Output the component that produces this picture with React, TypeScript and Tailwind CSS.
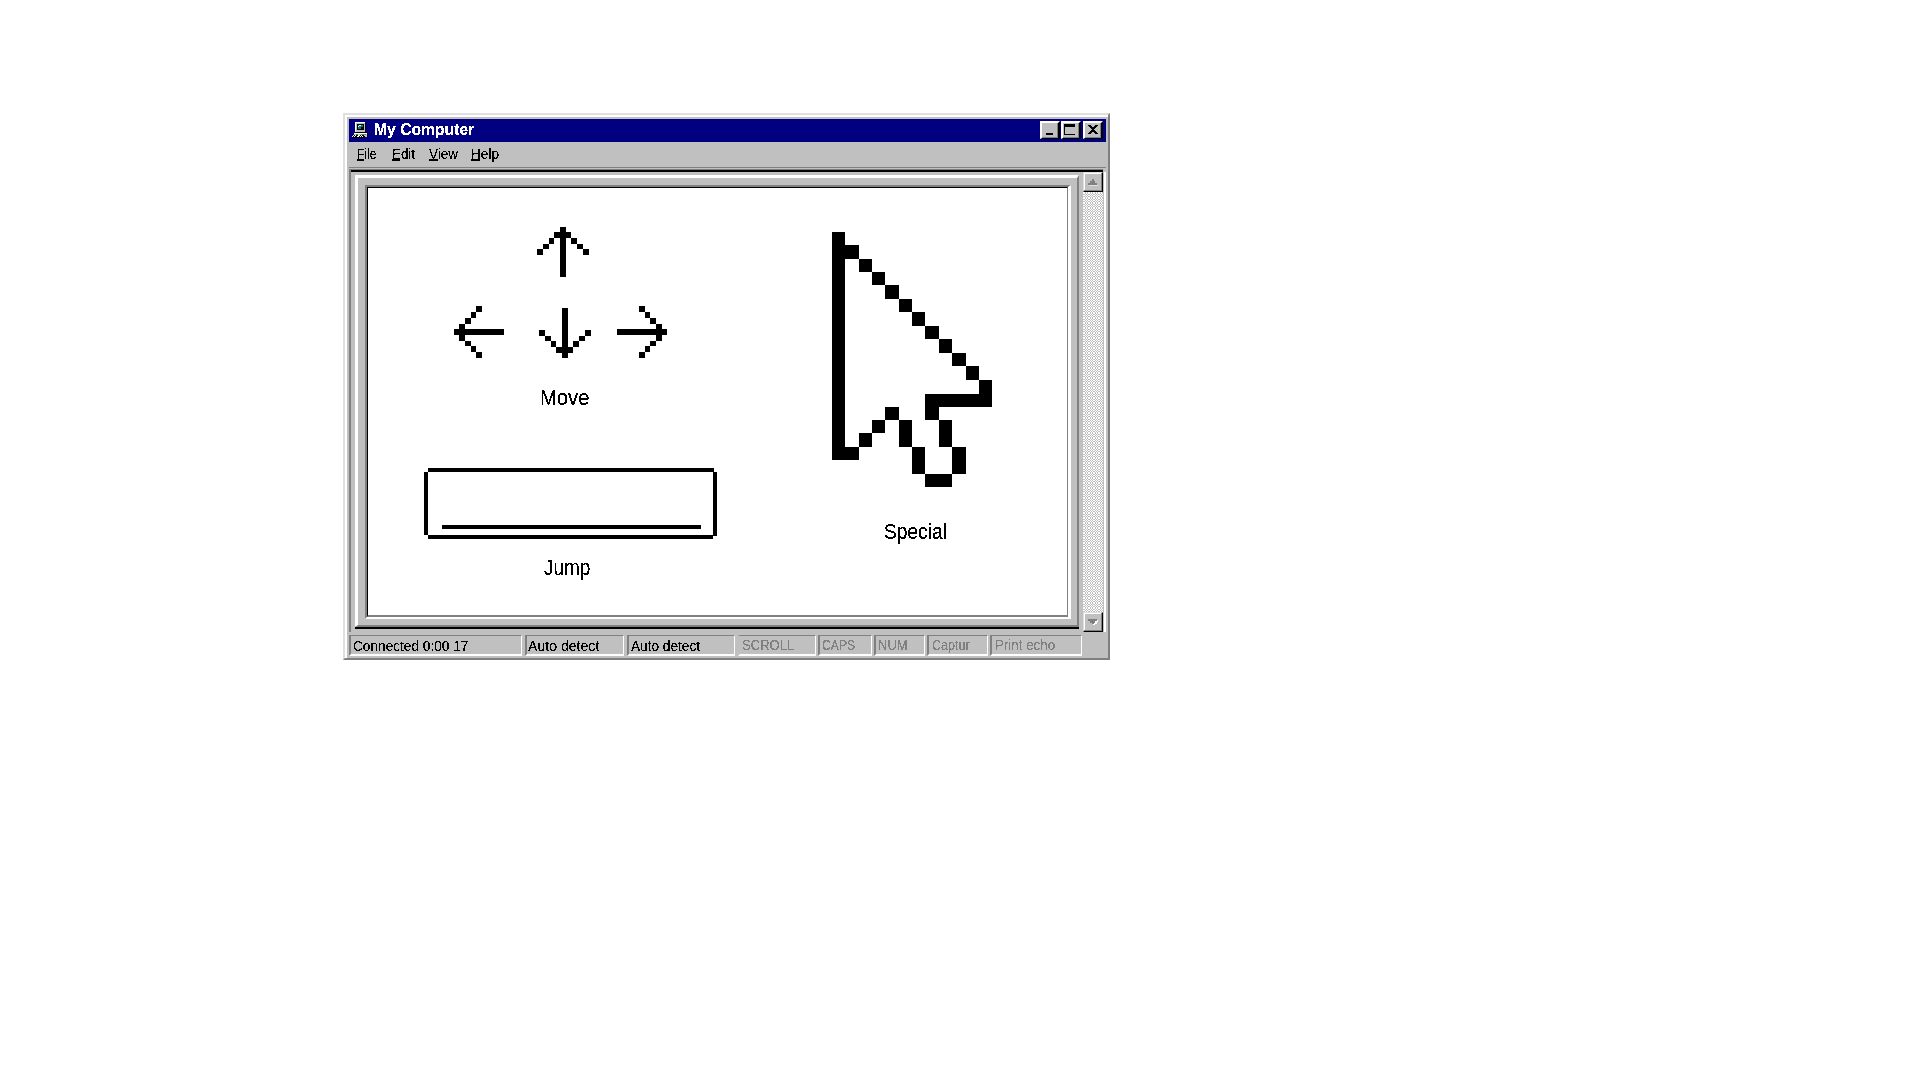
import React from "react";

type Rect = [number, number, number, number];

function Pixels({ w, h, rects, className = "" }: { w: number; h: number; rects: Rect[]; className?: string }) {
  return (
    <svg width={w} height={h} viewBox={`0 0 ${w} ${h}`} shapeRendering="crispEdges" className={`block shrink-0 ${className}`}>
      {rects.map(([x, y, rw, rh], i) => (
        <rect key={i} x={x} y={y} width={rw} height={rh} />
      ))}
    </svg>
  );
}

const upArrow: Rect[] = [
  [23, 0, 6, 50], [17, 5, 17, 6], [12, 11, 5, 6], [6, 17, 6, 5], [0, 22, 6, 6],
  [34, 11, 6, 6], [40, 17, 6, 5], [46, 22, 6, 6],
];
const downArrow: Rect[] = upArrow.map(([x, y, w, h]) => [x, 50 - y - h, w, h]);
const leftArrow: Rect[] = [
  [0, 23, 50, 6], [5, 18, 6, 17], [11, 12, 6, 6], [17, 6, 5, 6], [22, 0, 6, 6],
  [11, 35, 6, 5], [17, 40, 5, 6], [22, 46, 6, 6],
];
const rightArrow: Rect[] = leftArrow.map(([x, y, w, h]) => [50 - x - w, y, w, h]);
const spaceBar: Rect[] = [
  [4, 0, 286, 4], [0, 4, 4, 63], [289, 4, 4, 64], [4, 67, 285, 4], [18, 57, 259, 4],
];

const cols = [0, 13, 27, 40, 53, 67, 80, 93, 107, 120, 134, 147, 160];
const rowsY = [0, 13, 27, 40, 53, 67, 80, 94, 107, 121, 134, 148, 162, 175, 188, 201, 215, 228, 242, 255];
const cursorMap = [
  "#...........",
  "##..........",
  "#.#.........",
  "#..#........",
  "#...#.......",
  "#....#......",
  "#.....#.....",
  "#......#....",
  "#.......#...",
  "#........#..",
  "#.........#.",
  "#..........#",
  "#......#####",
  "#...#..#....",
  "#..#.#..#...",
  "#.#..#..#...",
  "##....#..#..",
  "......#..#..",
  ".......##...",
];
const cursor: Rect[] = cursorMap.flatMap((row, r) =>
  row.split("").flatMap((c, i): Rect[] =>
    c === "#" ? [[cols[i], rowsY[r], cols[i + 1] - cols[i], rowsY[r + 1] - rowsY[r]]] : []
  )
);

/* uneven checkerboard tile: a 4px checker stretched over 5px */
const parity = [0, 0, 1, 0, 1];
const dither: [number, number][] = parity.flatMap((py, y) =>
  parity.flatMap((px, x): [number, number][] => (px !== py ? [[x, y]] : []))
);

const crisp = "block w-fit origin-left whitespace-pre [filter:url(#crisp)]";

function MenuItem({ first, rest, line, scale, className }: { first: string; rest: string; line: string; scale: string; className: string }) {
  return (
    <div className={`shrink-0 ${className}`}>
      <div className={`text-[15px] leading-[17px] ${crisp} ${scale}`}>{first}{rest}</div>
      <div className={`-mt-[3px] h-[2px] bg-black ${line}`} />
    </div>
  );
}

function Status({ text, className, scale, off = false }: { text: string; className: string; scale: string; off?: boolean }) {
  return (
    <div className={`h-[21px] shrink-0 overflow-hidden border-t border-r border-b-2 border-l-2 border-t-[#808080] border-r-white border-b-white border-l-[#808080] ${off ? "text-[#808080]" : "text-black"} ${className}`}>
      <div className={`text-[15px] leading-[17px] ${off ? "" : "pt-px"}`}>
        <span className={`${crisp} ${scale}`}>{text}</span>
      </div>
    </div>
  );
}

function CaptionButton({ children, className = "" }: { children: React.ReactNode; className?: string }) {
  return (
    <div className={`h-[18px] w-5 shrink-0 border-t-2 border-r-2 border-b border-l-2 border-t-white border-r-black border-b-black border-l-white bg-[#c0c0c0] shadow-[inset_-1px_-1px_0_#808080] ${className}`}>
      {children}
    </div>
  );
}

function ScrollButton({ down = false }: { down?: boolean }) {
  return (
    <div className="h-5 w-5 shrink-0 border-t border-r border-b border-l border-t-[#dfdfdf] border-r-black border-b-black border-l-[#dfdfdf] bg-[#c0c0c0] shadow-[inset_-1px_-1px_0_#808080,inset_1px_1px_0_#fff]">
      <svg width="18" height="18" shapeRendering="crispEdges" className="block">
        {down ? (
          <>
            <path d="M5 7h9v2h-1v2h-2v1H9v-2H6V8H5z" fill="#fff" />
            <path d="M4 6h9v2h-2v2h-1v1H8v-1H6V8H4z" fill="#808080" />
          </>
        ) : (
          <>
            <path d="M5 12h9v1H5z" fill="#dfdfdf" />
            <path d="M8 6h2v2h1v2h2v2H4v-2h2V8h2z" fill="#808080" />
          </>
        )}
      </svg>
    </div>
  );
}

function ComputerIcon() {
  return (
    <svg width="16" height="16" viewBox="0 0 16 16" shapeRendering="crispEdges" className="block shrink-0">
      <path d="M3 0h10v10H3z" fill="#c0c0c0" />
      <path d="M3 0h10v1H4v9H3z" fill="#fff" />
      <path d="M13 1h1v9h-1zM4 10h10v1H4z" fill="#000" />
      <path d="M5 2h7v6H5z" fill="#000" />
      <path d="M6 3h5v4H6z" fill="#008080" />
      <path d="M7 3h2v1H7zM6 4h1v1H6z" fill="#fff" />
      <path d="M9 5h2v2H9z" fill="#000" />
      <path d="M2 11h13v4H2z" fill="#c0c0c0" />
      <path d="M2 11h13v1H2z" fill="#fff" />
      <path d="M15 11h1v4h-1z" fill="#000" />
      <path d="M4 12h2v1H4z" fill="#00c000" />
      <path d="M9 12h5v1H9z" fill="#808080" />
      <path d="M1 13h11v1H1zM0 14h12v2H0z" fill="#fff" />
      <path d="M2 13h1v1H2zM4 13h2v1H4zM8 13h1v1H8zM10 13h2v1h-2zM1 14h1v1H1zM3 14h2v1H3zM7 14h1v1H7zM9 14h1v1H9zM11 14h2v1h-2zM0 15h12v1H0z" fill="#000" />
    </svg>
  );
}

export default function App() {
  return (
    <div className="h-[1080px] w-[1920px] overflow-hidden bg-white pt-[113px] pl-[343px] font-['Liberation_Sans',Arial,sans-serif] text-black">
      <svg width="0" height="0" className="absolute">
        <filter id="crisp" x="-5%" y="-5%" width="110%" height="110%" colorInterpolationFilters="sRGB">
          <feComponentTransfer>
            <feFuncA type="discrete" tableValues="0 0 1 1 1" />
          </feComponentTransfer>
        </filter>
      </svg>

      <div className="h-[547px] w-[767px] border-2 border-t-[#dfdfdf] border-r-[#808080] border-b-[#808080] border-l-[#dfdfdf]">
        <div className="flex h-[543px] w-[763px] flex-col border-t-2 border-l-2 border-white bg-[#c0c0c0] pt-[2px] pl-[2px]">
          {/* title bar */}
          <div className="flex h-[23px] w-[757px] shrink-0 bg-[#000080] pt-[2px] pl-[3px]">
            <div className="pt-px"><ComputerIcon /></div>
            <div className="w-[669px] pl-[6px] text-white">
              <div className={`text-[16px] leading-[18px] font-bold ${crisp} scale-x-[0.98]`}>My Computer</div>
            </div>
            <CaptionButton className="ml-[3px]">
              <div className="mt-[10px] ml-1 h-[2px] w-[7px] bg-black" />
            </CaptionButton>
            <CaptionButton className="ml-px">
              <div className="mt-px ml-px h-[11px] w-[11px] border-t-[3px] border-b border-l border-black" />
            </CaptionButton>
            <CaptionButton className="ml-[2px]">
              <svg width="16" height="15" shapeRendering="crispEdges" className="block">
                <path d="M3 2h3v1h1v1h2V3h1V2h3v1h-1v1h-1v1h-1v1H9v1h1v1h1v1h1v1h1v1h-3v-1H9V9H7v1H6v1H3v-1h1V9h1V8h1V7h1V6H6V5H5V4H4V3H3z" />
              </svg>
            </CaptionButton>
          </div>

          {/* menu bar */}
          <div className="flex h-[26px] w-[757px] shrink-0 border-b border-[#808080] pt-[3px] pl-2">
            <MenuItem first="F" rest="ile" line="w-[7px]" scale="scale-x-[0.8]" className="w-[35px]" />
            <MenuItem first="E" rest="dit" line="w-[8px]" scale="scale-x-[0.89]" className="w-[37px]" />
            <MenuItem first="V" rest="iew" line="w-[9px]" scale="scale-x-[0.9]" className="w-[42px]" />
            <MenuItem first="H" rest="elp" line="w-[9px]" scale="scale-x-[0.91]" className="w-[40px]" />
          </div>

          <div className="mt-px flex h-[463px] shrink-0 items-start">
            {/* sunken client area */}
            <div className="h-[463px] w-[734px] border-t border-l-2 border-[#808080]">
              <div className="h-[460px] w-[732px] border-t-2 border-black pl-1">
                <div className="h-[458px] w-[724px] pt-[3px]">
                  <div className="h-[454px] w-[724px] border-b-2 border-black">
                    <div className="h-[452px] w-[724px] border-t-[3px] border-r-2 border-b-2 border-l-[3px] border-t-white border-r-[#808080] border-b-[#808080] border-l-white pt-[7px] pl-[7px]">
                      <div className="h-[434px] w-[706px] border-t-2 border-r-[3px] border-b-2 border-l-2 border-t-[#808080] border-r-white border-b-white border-l-[#808080]">
                        <div className="h-[430px] w-[701px] border-t border-r border-b-2 border-l border-t-black border-r-[#808080] border-b-[#808080] border-l-black">
                          <div className="flex h-[427px] w-[699px] bg-white">
                            {/* keyboard controls */}
                            <div className="w-[464px] pl-[56px]">
                              <Pixels w={52} h={50} rects={upArrow} className="mt-[39px] ml-[113px]" />
                              <div className="mt-[29px] ml-[30px] flex">
                                <Pixels w={50} h={52} rects={leftArrow} />
                                <Pixels w={52} h={50} rects={downArrow} className="mt-[2px] ml-[35px]" />
                                <Pixels w={50} h={52} rects={rightArrow} className="ml-[26px]" />
                              </div>
                              <div className="mt-[27px] ml-[116px] h-[24px] text-[22px] leading-[25px]">
                                <span className={`${crisp} scale-x-[0.92]`}>Move</span>
                              </div>
                              <Pixels w={293} h={71} rects={spaceBar} className="mt-[59px]" />
                              <div className="mt-[16px] ml-[120px] h-[25px] text-[22px] leading-[25px]">
                                <span className={`${crisp} scale-x-[0.86]`}>Jump</span>
                              </div>
                            </div>
                            {/* mouse control */}
                            <div>
                              <Pixels w={160} h={255} rects={cursor} className="mt-[44px]" />
                              <div className="mt-[32px] ml-[52px] h-[25px] text-[22px] leading-[25px]">
                                <span className={`${crisp} scale-x-[0.87]`}>Special</span>
                              </div>
                            </div>
                          </div>
                        </div>
                      </div>
                    </div>
                  </div>
                </div>
              </div>
            </div>
            {/* scrollbar */}
            <div className="w-[23px]">
              <div className="h-[3px] w-5 border-t border-b-2 border-t-[#808080] border-b-black" />
              <div className="flex h-[460px] w-[23px] flex-col border-r-2 border-white">
                <ScrollButton />
                <svg width="20" className="block h-[420px] shrink-0" shapeRendering="crispEdges">
                  <pattern id="dither" width="5" height="5" patternUnits="userSpaceOnUse">
                    <rect width="5" height="5" fill="#fff" />
                    {dither.map(([x, y]) => (
                      <rect key={`${x}-${y}`} x={x} y={y} width="1" height="1" fill="#c0c0c0" />
                    ))}
                  </pattern>
                  <rect width="20" height="420" fill="url(#dither)" />
                </svg>
                <ScrollButton down />
              </div>
            </div>
          </div>

          {/* status bar */}
          <div className="mt-[3px] flex h-[21px] shrink-0">
            <Status text="Connected 0:00 17" className="w-[173px] pl-[2px]" scale="scale-x-[0.91]" />
            <Status text="Auto detect" className="ml-[3px] w-[99px] pl-px" scale="scale-x-[0.94]" />
            <Status text="Auto detect" className="ml-[3px] w-[108px] pl-[2px]" scale="scale-x-[0.91]" />
            <Status text="SCROLL" off className="ml-[3px] w-[78px] border-l-[#c0c0c0] pl-[2px]" scale="scale-x-[0.87]" />
            <Status text="CAPS" off className="ml-[2px] w-[54px] pl-[2px]" scale="scale-x-[0.81]" />
            <Status text="NUM" off className="ml-[2px] w-[51px] pl-[2px]" scale="scale-x-[0.87]" />
            <Status text="Captur" off className="ml-[2px] w-[61px] pl-[3px]" scale="scale-x-[0.84]" />
            <Status text="Print echo" off className="ml-[2px] w-[92px] pl-[3px]" scale="scale-x-[0.89]" />
          </div>
        </div>
      </div>
    </div>
  );
}
